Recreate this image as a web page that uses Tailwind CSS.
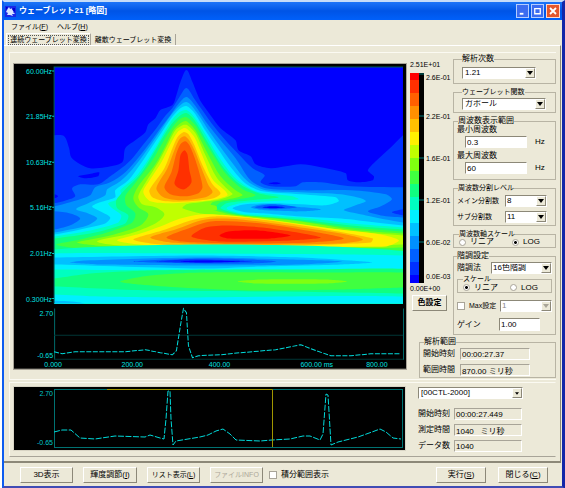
<!DOCTYPE html>
<html>
<head>
<meta charset="utf-8">
<title>ウェーブレット21</title>
<script src="https://cdn.jsdelivr.net/npm/@tailwindcss/browser@4"></script>
</head>
<body class="min-h-screen bg-white pl-[2px] font-['Liberation_Sans','Noto_Sans_CJK_JP',sans-serif] text-[8px] leading-[8px] text-black">
<div class="flex min-h-screen flex-col border-t-2 border-r-3 border-b-3 border-l-2 border-t-[#c5dcf8] border-r-[#1426a8] border-b-[#404cb4] border-l-[#0c5cf0] bg-[#ece9d8]">

  <header class="flex h-[18px] items-center bg-linear-to-b from-[#1c74f8] via-[#0054e6] to-[#0060fa] pr-[2px] pl-[1px] text-white">
    <svg class="mr-[3px] h-[11px] w-[11px]" viewBox="0 0 11 11" aria-hidden="true"><rect width="11" height="11" fill="#1828e8"/><path d="M2 4L4 1L5 3L8 2L7 4L10 4L8 6L10 8L7 8L8 10L5 9L2 9L3 7L1 6Z" fill="#d8e4ff"/><path d="M7 2H10V6L8 5ZM1 1H3L1 4Z" fill="#0000d0"/></svg>
    <h1 class="flex-1 text-[8px] font-bold">ウェーブレット21 [略図]</h1>
    <div class="flex gap-[2px]">
      <button aria-label="最小化" class="flex h-[14px] w-[13px] items-center justify-center border border-[#b4ccff] bg-[#3c6cf0]"><svg class="h-3 w-3" viewBox="0 0 12 12"><path d="M3 9H7" stroke="#fff" stroke-width="2"/></svg></button>
      <button aria-label="最大化" class="flex h-[14px] w-[13px] items-center justify-center border border-[#b4ccff] bg-[#3c6cf0]"><svg class="h-3 w-3" viewBox="0 0 12 12"><path d="M3 3.5H9V9H3Z" fill="none" stroke="#fff" stroke-width="1.4"/></svg></button>
      <button aria-label="閉じる" class="flex h-[14px] w-[14px] items-center justify-center border border-[#ffd8cc] bg-[#e4562c]"><svg class="h-3 w-3" viewBox="0 0 12 12"><path d="M3 3L9 9M9 3L3 9" stroke="#fff" stroke-width="1.8"/></svg></button>
    </div>
  </header>

  <nav class="flex h-[13px] items-center gap-[9px] pl-[7px] text-[7px]">
    <button>ファイル(<u>F</u>)</button>
    <button>ヘルプ(<u>H</u>)</button>
  </nav>

  <div role="tablist" class="flex h-[12px] items-end pl-[2px] text-[7px]">
    <button role="tab" aria-selected="true" class="h-[12px] w-[85px] border-t border-r border-l border-t-white border-r-[#a8a498] border-l-white"><span class="mx-[2px] block outline-1 outline-dotted outline-[#555]">連続ウェーブレット変換</span></button>
    <button role="tab" aria-selected="false" class="h-[11px] w-[85px] border-r border-r-[#a8a498]">離散ウェーブレット変換</button>
  </div>

  <main class="mr-[1px] flex flex-1 flex-col gap-[2px] border-t border-r border-b-2 border-t-white border-r-[#8c8878] border-b-[#8c8878] pt-[6px] pr-[4px] pb-[4px] pl-[5px]">
    <section class="flex items-start gap-1 border-t border-b border-l border-[#fbfaf2] pt-[2px] pb-[1px] pl-[4px]">
      <svg id="scalogram" class="mt-[9px] h-auto min-w-0 flex-1 outline-1 outline-[#a8a498]" viewBox="14 64 391 304" font-size="8">
        <rect x="14" y="64" width="391" height="304" fill="#000"/>
        <clipPath id="area"><rect x="54" y="67" width="348" height="236"/></clipPath>
        <g id="field" clip-path="url(#area)"><rect x="54" y="67" width="348" height="236" fill="#0000ff"/></g>
        <path d="M54 303V67H402" fill="none" stroke="#005f5f"/>
        <path d="M54.500 308V359M402.500 308V359" stroke="#006a6a"/>
        <path d="M54 334.500H402M54 358.500H402" stroke="#003636"/>
        <path d="M52 71H54M52 116H54M52 162H54M52 207H54M52 253H54M52 298H54" stroke="#00c8c8"/>
        <polyline fill="none" stroke="#00dada" stroke-dasharray="5 1.500" points="54,351 62,353 75,351 100,351 125,351 145,349 160,352 172,354 176,350 180,325 183,308 186,312 188,345 192,357 198,355 220,354 240,352 275,349 290,346 300,344 310,348 330,355 350,355 370,353 400,353"/>
        <g fill="#00e0e0" font-size="7">
          <g text-anchor="end">
            <text x="52" y="74">60.00Hz</text><text x="52" y="119">21.85Hz</text><text x="52" y="165">10.63Hz</text><text x="52" y="210">5.16Hz</text><text x="52" y="256">2.01Hz</text><text x="52" y="301">0.300Hz</text>
            <text x="53" y="315">2.70</text><text x="53" y="357">-0.65</text>
          </g>
          <g text-anchor="middle">
            <text x="53" y="366">0.000</text><text x="132" y="366">200.00</text><text x="219" y="366">400.00</text><text x="316" y="366">600.00 ms</text><text x="376" y="366">800.00</text>
          </g>
        </g>
      </svg>

      <div class="w-[146px] shrink-0">
        <div class="flex">
          <div class="w-[43px] pt-[6px]">
            <p class="h-[12px] text-[7px] whitespace-nowrap">2.51E+01</p>
            <svg class="h-[210px] w-[43px]" viewBox="409 73 43 210" font-size="7">
              <g id="bar"></g>
              <rect x="418" y="73" width="5" height="210" fill="#000"/>
              <path d="M418 74H423M418 116H423M418 158H423M418 200H423M418 242H423" stroke="#007878"/>
              <text x="425" y="80">2.6E-01</text><text x="425" y="119">2.2E-01</text><text x="425" y="161">1.6E-01</text><text x="425" y="203">1.2E-01</text><text x="425" y="245">6.0E-02</text><text x="425" y="279">0.0E-03</text>
            </svg>
            <p class="pt-[2px] text-[7px]">0.00E+00</p>
            <button class="mt-[2px] ml-[2px] h-[16px] w-[35px] border border-t-white border-r-[#8c8878] border-b-[#8c8878] border-l-white font-bold">色設定</button>
          </div>

          <div class="flex w-[103px] flex-col gap-1">
            <fieldset class="border border-[#b8b4a4] px-[8px] pt-1 pb-1">
              <legend>解析次数</legend>
              <div class="relative h-3 w-[74px]"><select aria-label="解析次数" class="h-3 w-full appearance-none border border-t-[#8c8878] border-l-[#8c8878] border-r-white border-b-white bg-white pl-[2px]"><option>1.21</option></select><span class="pointer-events-none absolute top-[1px] right-[1px] flex h-[10px] w-[10px] items-center justify-center border border-t-white border-l-white border-r-[#8c8878] border-b-[#8c8878] bg-[#ece9d8]"><svg class="h-1 w-[6px]" viewBox="0 0 6 4"><path d="M0 0H6L3 4Z"/></svg></span></div>
            </fieldset>
            <fieldset class="border border-[#b8b4a4] px-[8px] pt-[2px] pb-[2px]">
              <legend class="text-[7px]">ウェーブレット関数</legend>
              <div class="relative h-3 w-[84px]"><select aria-label="ウェーブレット関数" class="h-3 w-full appearance-none border border-t-[#8c8878] border-l-[#8c8878] border-r-white border-b-white bg-white pl-[2px]"><option>ガボール</option></select><span class="pointer-events-none absolute top-[1px] right-[1px] flex h-[10px] w-[10px] items-center justify-center border border-t-white border-l-white border-r-[#8c8878] border-b-[#8c8878] bg-[#ece9d8]"><svg class="h-1 w-[6px]" viewBox="0 0 6 4"><path d="M0 0H6L3 4Z"/></svg></span></div>
            </fieldset>
            <fieldset class="border border-[#b8b4a4] pt-[1px] pr-[8px] pb-[5px] pl-[3px]">
              <legend class="ml-[1px]">周波数表示範囲</legend>
              <label for="fmin" class="block h-[10px]">最小周波数</label>
              <div class="mb-1 flex items-center gap-2 pl-[8px]"><input id="fmin" value="0.3" class="h-3 w-[62px] border border-t-[#8c8878] border-l-[#8c8878] border-r-white border-b-white bg-white px-[1px]"><span>Hz</span></div>
              <label for="fmax" class="block h-[10px]">最大周波数</label>
              <div class="flex items-center gap-2 pl-[8px]"><input id="fmax" value="60" class="h-3 w-[62px] border border-t-[#8c8878] border-l-[#8c8878] border-r-white border-b-white bg-white px-[1px]"><span>Hz</span></div>
            </fieldset>
            <fieldset class="border border-[#b8b4a4] pt-[3px] pr-[8px] pb-[2px] pl-[3px]">
              <legend class="ml-[1px] text-[7px]">周波数分割レベル</legend>
              <div class="mb-1 flex items-center justify-between text-[7px]"><label for="main">メイン分割数</label><div class="relative h-3 w-[42px]"><select id="main" class="h-3 w-full appearance-none border border-t-[#8c8878] border-l-[#8c8878] border-r-white border-b-white bg-white pl-[1px] text-[8px]"><option>8</option></select><span class="pointer-events-none absolute top-[1px] right-[1px] flex h-[10px] w-[10px] items-center justify-center border border-t-white border-l-white border-r-[#8c8878] border-b-[#8c8878] bg-[#ece9d8]"><svg class="h-1 w-[6px]" viewBox="0 0 6 4"><path d="M0 0H6L3 4Z"/></svg></span></div></div>
              <div class="flex items-center justify-between text-[7px]"><label for="sub">サブ分割数</label><div class="relative h-3 w-[42px]"><select id="sub" class="h-3 w-full appearance-none border border-t-[#8c8878] border-l-[#8c8878] border-r-white border-b-white bg-white pl-[1px] text-[8px]"><option>11</option></select><span class="pointer-events-none absolute top-[1px] right-[1px] flex h-[10px] w-[10px] items-center justify-center border border-t-white border-l-white border-r-[#8c8878] border-b-[#8c8878] bg-[#ece9d8]"><svg class="h-1 w-[6px]" viewBox="0 0 6 4"><path d="M0 0H6L3 4Z"/></svg></span></div></div>
            </fieldset>
            <fieldset class="border border-[#b8b4a4] pb-[1px] pl-[5px]">
              <legend class="text-[7px]">周波数軸スケール</legend>
              <div class="flex h-[8px] items-center gap-[18px]">
                <label class="flex items-center gap-1"><input type="radio" name="axis" class="h-[7px] w-[7px] appearance-none rounded-full border border-[#a8a498] bg-white checked:bg-[radial-gradient(#000_35%,#fff_45%)]">リニア</label>
                <label class="flex items-center gap-1"><input type="radio" name="axis" checked class="h-[7px] w-[7px] appearance-none rounded-full border border-[#a8a498] bg-white checked:bg-[radial-gradient(#000_35%,#fff_45%)]">LOG</label>
              </div>
            </fieldset>
            <fieldset class="border border-[#b8b4a4] pt-[2px] pr-[3px] pb-[3px] pl-[3px]">
              <legend>階調設定</legend>
              <div class="mb-[1px] flex items-center justify-between"><label for="tone">階調法</label><div class="relative h-3 w-[61px]"><select id="tone" class="h-3 w-full appearance-none border border-t-[#8c8878] border-l-[#8c8878] border-r-white border-b-white bg-white pl-[1px]"><option>16色階調</option></select><span class="pointer-events-none absolute top-[1px] right-[1px] flex h-[10px] w-[10px] items-center justify-center border border-t-white border-l-white border-r-[#8c8878] border-b-[#8c8878] bg-[#ece9d8]"><svg class="h-1 w-[6px]" viewBox="0 0 6 4"><path d="M0 0H6L3 4Z"/></svg></span></div></div>
              <fieldset class="mb-[7px] border border-[#b8b4a4] pl-[5px]">
                <legend class="text-[7px]">スケール</legend>
                <div class="flex h-[9px] items-center gap-[12px]">
                  <label class="flex items-center gap-1"><input type="radio" name="tscale" checked class="h-[7px] w-[7px] appearance-none rounded-full border border-[#a8a498] bg-white checked:bg-[radial-gradient(#000_35%,#fff_45%)]">リニア</label>
                  <label class="flex items-center gap-1"><input type="radio" name="tscale" class="h-[7px] w-[7px] appearance-none rounded-full border border-[#a8a498] bg-white checked:bg-[radial-gradient(#000_35%,#fff_45%)]">LOG</label>
                </div>
              </fieldset>
              <div class="mb-[6px] flex items-center justify-between"><label class="flex items-center gap-1 text-[7px] whitespace-nowrap"><input type="checkbox" class="h-2 w-2 appearance-none border border-[#a8a498] bg-white">Max設定</label><div class="relative h-3 w-[52px]"><select aria-label="Max" disabled class="h-3 w-full appearance-none border border-t-[#8c8878] border-l-[#8c8878] border-r-white border-b-white bg-white pl-[1px] text-[#888]"><option>1</option></select><span class="pointer-events-none absolute top-[1px] right-[1px] flex h-[10px] w-[10px] items-center justify-center border border-t-white border-l-white border-r-[#8c8878] border-b-[#8c8878] bg-[#ece9d8]"><svg class="h-1 w-[6px]" viewBox="0 0 6 4"><path d="M0 0H6L3 4Z" fill="#a8a498"/></svg></span></div></div>
              <div class="flex items-center justify-between pr-[12px]"><label for="gain">ゲイン</label><input id="gain" value="1.00" class="h-[13px] w-[41px] border border-t-[#8c8878] border-l-[#8c8878] border-r-white border-b-white bg-white px-[1px]"></div>
            </fieldset>
          </div>
        </div>

        <fieldset class="mt-[3px] ml-[9px] border border-[#b8b4a4] pt-[2px] pb-[1px] pl-[3px]">
          <legend class="ml-[1px]">解析範囲</legend>
          <div class="mb-1 flex items-center gap-[5px]"><label for="t0">開始時刻</label><input id="t0" readonly value="00:00:27.37" class="h-3 w-[70px] border border-t-[#a8a498] border-l-[#a8a498] border-r-white border-b-white px-[1px]"></div>
          <div class="flex items-center gap-[5px]"><label for="t1">範囲時間</label><input id="t1" readonly value="870.00 ミリ秒" class="h-3 w-[70px] border border-t-[#a8a498] border-l-[#a8a498] border-r-white border-b-white px-[1px]"></div>
        </fieldset>
      </div>
    </section>

    <section class="flex items-start gap-1 border border-t-[#fbfaf2] border-r-transparent border-b-[#a8a498] border-l-[#fbfaf2] py-[4px] pl-[4px]">
      <svg class="h-auto min-w-0 flex-1 outline-1 outline-[#d8d4c4]" viewBox="14 388 391 63" font-size="7">
        <rect x="14" y="388" width="391" height="63" fill="#000"/>
        <rect x="54.500" y="390.500" width="348" height="58" fill="none" stroke="#007272"/>
        <polyline fill="none" stroke="#00dada" stroke-dasharray="6 1.500" points="54,433 62,431 71,431 80,439 95,440 115,437 145,438 150,436 160,439 164,440 166,420 168,392 170,392 171,420 173,446 176,442 200,438 208,436 216,432 223,430 230,435 236,441 260,442 272,441 290,440 303,437 310,437 320,441 323,435 326,395 328,396 331,446 338,443 358,438 372,433 380,430 386,433 393,439 401,440"/>
        <path d="M107 390.500H272.500V448" fill="none" stroke="#a09600"/>
        <g fill="#00c8c8" text-anchor="end"><text x="53" y="397">2.70</text><text x="53" y="446">-0.65</text></g>
      </svg>
      <div class="w-[146px] shrink-0 pl-[9px]">
        <div class="relative mb-[9px] h-3 w-[105px]"><select aria-label="データ" class="h-3 w-full appearance-none border border-t-[#8c8878] border-l-[#8c8878] border-r-white border-b-white bg-white pl-[2px]"><option>[00CTL-2000]</option></select><span class="pointer-events-none absolute top-[1px] right-[1px] flex h-[10px] w-[10px] items-center justify-center border border-t-white border-l-white border-r-[#8c8878] border-b-[#8c8878] bg-[#ece9d8]"><svg class="h-[3px] w-1" viewBox="0 0 6 4"><path d="M0 0H6L3 4Z"/></svg></span></div>
        <div class="flex flex-col gap-[4px]">
          <div class="flex items-center"><label for="s0" class="w-[36px]">開始時刻</label><input id="s0" readonly value="00:00:27.449" class="h-3 w-[68px] border border-t-[#a8a498] border-l-[#a8a498] border-r-white border-b-white px-[1px]"></div>
          <div class="flex items-center"><label for="s1" class="w-[36px]">測定時間</label><input id="s1" readonly value="1040   ミリ秒" class="h-3 w-[68px] border border-t-[#a8a498] border-l-[#a8a498] border-r-white border-b-white px-[1px]"></div>
          <div class="flex items-center"><label for="s2" class="w-[36px]">データ数</label><input id="s2" readonly value="1040" class="h-3 w-[68px] border border-t-[#a8a498] border-l-[#a8a498] border-r-white border-b-white px-[1px]"></div>
        </div>
      </div>
    </section>
  </main>

  <footer class="flex h-[23px] shrink-0 items-center gap-[10px] pr-[14px] pl-[16px]">
    <button class="h-4 w-[53px] border border-t-white border-r-[#8c8878] border-b-[#8c8878] border-l-white">3D表示</button>
    <button class="h-4 w-[54px] border border-t-white border-r-[#8c8878] border-b-[#8c8878] border-l-white">輝度調節(<u>I</u>)</button>
    <button class="h-4 w-[53px] border border-t-white border-r-[#8c8878] border-b-[#8c8878] border-l-white text-[7px]">リスト表示(<u>L</u>)</button>
    <button disabled class="h-4 w-[53px] border border-t-white border-r-[#8c8878] border-b-[#8c8878] border-l-white text-[7px] text-[#aca899]">ファイルINFO</button>
    <label class="-ml-[4px] flex flex-1 items-center gap-1"><input type="checkbox" class="h-2 w-2 appearance-none border border-[#a8a498] bg-white">積分範囲表示</label>
    <button class="mr-[2px] h-4 w-[50px] border border-t-white border-r-[#8c8878] border-b-[#8c8878] border-l-white">実行(<u>S</u>)</button>
    <button class="h-4 w-[50px] border border-t-white border-r-[#8c8878] border-b-[#8c8878] border-l-white">閉じる(<u>C</u>)</button>
  </footer>
</div>

<script>
const NS = 'http://www.w3.org/2000/svg';
const palette = ['#ff0000','#ff3000','#ff6000','#ff9000','#ffc000','#fff000','#c0ff00','#80ff10','#40ff40','#10ff80','#00ffc0','#00f0ff','#00c0ff','#0090ff','#0060ff','#0030ff','#0000ff'];

// Each contour: [palette index, outline points]; later entries lie over earlier ones.
const B = ' 420,330 30,330';
const contours = [
  [15,'40,135 54,135 64,136 69,148 71,157 80,164 90,168 105,167 122,162 125,148 135,140 145,132 148,124 155,118 160,110 172,105 176,95 180,82 186,70 192,82 196,92 200,101 210,115 220,128 235,140 238,150 250,156 255,164 270,168 285,166 300,164 320,167 345,173 347,180 358,182 372,180 373,176 367,170 378,158 390,147 402,135 420,120'+B],
  [16,'78,176 88,174 99,172 98,176 85,178'],
  [16,'54,194 58,196 54,198 50,196'],
  [16,'268,183 275,182 280,183 275,184'],
  [14,'40,204 54,203 66,200 75,196 72,188 80,184 98,184 110,176 125,165 133,157 140,148 148,138 156,128 163,118 172,108 179,97 186,88 194,99 201,109 211,123 225,140 240,156 252,168 264,175 260,182 270,186 295,186 302,182 320,182 350,186 402,187 430,187'+B],
  [13,'40,207 54,206 70,202 90,195 95,187 110,182 125,172 140,155 150,142 160,128 170,115 178,104 186,97 195,106 205,121 220,140 235,158 250,180 265,188 300,190 350,190 385,194 391,199 380,206 367,211 380,215 402,217 430,219'+B],
  [14,'40,211 54,211 70,213 80,218 72,224 54,229 40,229'],
  [15,'410,208 402,209 391,212 402,215 410,215'],
  [12,'30,234 54,232 70,229 87,225 97,218 88,213 76,209 88,203 105,195 107,189 120,181 132,169 145,152 155,138 165,123 175,110 186,102 196,112 206,127 218,144 232,163 247,181 265,190 300,192 340,194 360,198 365,201 352,206 343,210 365,215 402,222 430,225'+B],
  [11,'30,236 54,234 80,229 105,223 110,217 98,210 92,206 100,202 115,197 115,190 128,180 140,164 150,149 160,134 170,119 179,109 186,106 194,113 204,129 217,148 231,168 246,184 262,191 300,194 335,197 338,201 325,205 300,204 272,203 245,204 232,208 245,212 265,213 300,216 340,218 375,222 402,225 430,228'+B],
  [10,'30,239 54,236 90,230 118,222 121,215 112,208 108,203 122,197 120,190 135,177 148,159 160,139 170,122 179,112 186,110 194,117 205,134 218,156 235,178 255,191 275,194 292,196 298,199 270,201 240,203 226,208 240,213 270,215 310,218 350,223 402,227 430,230'+B],
  [9,'30,241 54,238 95,232 125,223 128,215 117,208 116,200 125,189 140,174 152,155 162,138 171,124 179,116 186,113 194,120 206,140 222,166 238,183 258,193 278,197 250,200 226,203 220,208 240,214 300,219 350,225 402,229 430,231'+B],
  [8,'56,244 80,239 110,231 132,222 135,213 126,205 125,196 134,184 152,160 163,141 172,127 179,119 186,117 195,125 208,147 225,173 242,189 255,195 238,199 220,202 215,208 235,214 290,219 350,227 402,231 420,232 420,250 402,250 300,251 200,251 110,250 70,247'],
  [7,'77,242 110,235 140,225 148,214 138,207 133,198 138,186 155,164 165,146 173,130 180,123 186,121 195,130 207,153 220,176 235,190 242,195 228,199 212,202 209,208 225,213 250,216 300,221 350,229 402,233 420,234 420,247 402,247 300,249 150,248 95,245'],
  [6,'97,241 130,233 155,223 164,214 155,207 142,204 138,196 146,181 158,162 168,143 175,130 182,125 187,125 195,133 205,155 216,177 228,190 232,194 220,199 200,202 186,204 182,208 200,213 240,216 290,222 345,230 402,235 420,237 420,244 402,244 330,247 200,248 130,246'],
  [7,'196,207 205,204 216,206 216,210 203,210'],
  [5,'143,192 148,182 161,162 170,144 177,132 183,128 187,129 194,137 203,158 212,179 224,190 227,195 215,199 200,201 170,203 150,201'],
  [5,'117,240 140,233 160,226 180,218 200,214 230,215 280,221 330,228 380,234 398,240 385,246 300,246 220,247 150,245'],
  [4,'149,190 164,168 172,148 177,137 183,132 188,134 194,145 202,165 212,184 220,193 213,198 190,201 165,201 152,197'],
  [4,'133,239 165,229 190,220 215,216 260,219 320,228 372,238 370,242 300,245 200,246 150,243'],
  [3,'156,188 167,168 174,150 179,139 184,136 188,139 194,150 201,168 208,185 212,192 205,197 180,200 163,197'],
  [3,'150,237 175,229 205,219 240,219 300,227 340,233 362,239 340,243 220,244 170,242'],
  [2,'164,187 171,172 176,153 180,144 185,141 189,145 194,157 199,173 202,187 198,193 185,196 170,194'],
  [2,'166,237 185,229 210,221 250,222 300,229 343,238 310,242 230,243 180,241'],
  [1,'174,183 178,170 180,155 184,150 187,154 189,170 191,182 184,189 177,187'],
  [1,'191,236 205,227 230,225 270,228 320,237 290,240 220,241'],
  [0,'219,235 228,231 258,230 290,235 270,238 228,238'],
  [13,'250,207 262,204 290,206 320,209 300,211 265,210'],
  [14,'254,207 272,204 296,207 272,209'],
  [16,'262,207 272,206 284,207 272,208'],
  // slow oscillation bands
  [10,'30,252 420,253 420,320 30,320'],
  [11,'30,254 200,253 420,256 420,268 200,269 30,268'],
  [12,'30,257 54,257 200,255 300,257 350,260 371,262 340,264 260,266 200,268 54,264 30,264'],
  [13,'70,262 85,260 200,257 290,259 341,261 300,264 200,265 100,264'],
  [14,'133,261 200,258 250,259 276,261 250,263 190,263'],
  [15,'155,261 190,259 235,260 252,261 220,262 180,262'],
  [16,'180,261 200,260 240,261 200,262'],
  [9,'30,280 54,278 90,273 150,270 300,269 420,270 420,293 402,293 270,291 150,290 54,286 30,286'],
  [8,'120,281 150,275 200,272 300,272 420,273 420,287 402,287 340,289 250,290 180,287 140,284'],
  [7,'237,281 260,279 325,279 346,281 325,283 255,283'],
  [11,'30,293 54,294 100,296 180,297 420,297 420,320 30,320'],
  [12,'30,299 54,300 80,302 90,306 40,312']
];

// Catmull-Rom outline through the given points
function smooth(text) {
  const p = text.trim().split(' ').map(s => s.split(',').map(Number)), n = p.length;
  let d = 'M' + p[0];
  for (let i = 0; i < n; i++) {
    const a = p[(i + n - 1) % n], b = p[i], c = p[(i + 1) % n], e = p[(i + 2) % n];
    const far = Math.hypot(c[0] - b[0], c[1] - b[1]);
    const k1 = Math.min(1, far / (Math.hypot(b[0] - a[0], b[1] - a[1]) || 1)) / 6;
    const k2 = Math.min(1, far / (Math.hypot(e[0] - c[0], e[1] - c[1]) || 1)) / 6;
    d += 'C' + [b[0] + (c[0] - a[0]) * k1, b[1] + (c[1] - a[1]) * k1, c[0] - (e[0] - b[0]) * k2, c[1] - (e[1] - b[1]) * k2, c[0], c[1]].join(' ');
  }
  return d + 'Z';
}
const field = document.getElementById('field');
for (const [level, pts] of contours) {
  const path = document.createElementNS(NS, 'path');
  path.setAttribute('d', smooth(pts));
  path.setAttribute('fill', palette[level]);
  field.appendChild(path);
}
const bar = document.getElementById('bar');
palette.forEach((c, i) => {
  const top = i ? 67 + i * 13 : 73, r = document.createElementNS(NS, 'rect');
  r.setAttribute('x', 409); r.setAttribute('y', top);
  r.setAttribute('width', 9); r.setAttribute('height', 283 - top);
  r.setAttribute('fill', c);
  bar.appendChild(r);
});
</script>
</body>
</html>
